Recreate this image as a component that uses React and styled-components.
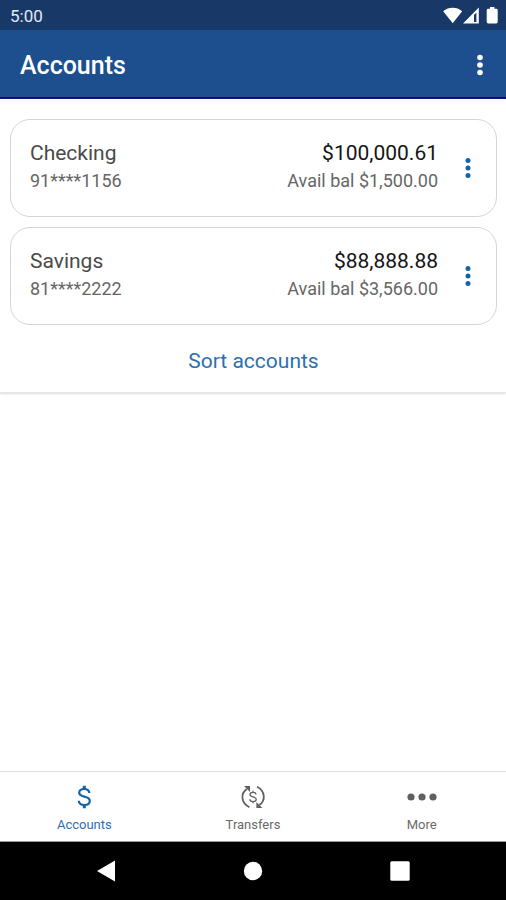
import React from "react";
import styled, { createGlobalStyle } from "styled-components";

const COLORS = {
  status: "#183967",
  header: "#1d4f8f",
  headerEdge: "#06097c",
  link: "#2e6fae",
  border: "#d5d5d5",
  text: "#4a4a4a",
  muted: "#666",
};

const accounts = [
  {
    name: "Checking",
    number: "91****1156",
    balance: "$100,000.61",
    available: "$1,500.00",
  },
  {
    name: "Savings",
    number: "81****2222",
    balance: "$88,888.88",
    available: "$3,566.00",
  },
];

const Kebab = ({ radius }) => (
  <svg width="8" height="24" viewBox="0 0 8 24" fill="currentColor">
    <circle cx="4" cy="4.5" r={radius} />
    <circle cx="4" cy="12" r={radius} />
    <circle cx="4" cy="19.5" r={radius} />
  </svg>
);

const StatusIcons = () => (
  <svg width="56" height="18" viewBox="0 0 56 18" fill="#fff">
    <path d="M.2 4.2C5.5-.3 13.9-.3 19.2 4.2L9.7 16.2Z" />
    <path
      fillRule="evenodd"
      d="M20 16.4 35.8.6V16.4ZM31 7.8V15H33.4V5.8Z"
    />
    <path d="M47 0H51.4V1.8H53.3Q54.7 1.8 54.7 3.2V15.1Q54.7 16.5 53.3 16.5H45.1Q43.7 16.5 43.7 15.1V3.2Q43.7 1.8 45.1 1.8H47Z" />
  </svg>
);

const DollarIcon = () => (
  <svg width="28" height="28" viewBox="0 0 28 28" fill="none" stroke="currentColor">
    <path
      strokeWidth="2.2"
      d="M19.4 10C19.4 7.4 17.2 6 14.2 6S9.2 7.4 9.2 9.8C9.2 15.3 19.8 12 19.8 18C19.8 20.6 17.5 22 14.3 22S8.8 20.4 8.8 17.8"
    />
    <path strokeWidth="3" d="M14.3 2.8V6.2M14.3 21.8V25.2" />
  </svg>
);

const TransferIcon = () => (
  <svg width="28" height="28" viewBox="0 0 28 28" fill="none" stroke="currentColor">
    <path strokeWidth="1.8" d="M10.4 24.2C1.8 20 1.4 10.4 7.8 6" />
    <path strokeWidth="1.8" d="M18 3.8C26.4 8 26.8 17.6 20.4 22" />
    <path fill="currentColor" stroke="none" d="M5 3H11V9Z" />
    <path fill="currentColor" stroke="none" d="M23.4 25H17.4V19Z" />
    <path
      strokeWidth="1.3"
      d="M17 11.4C17 10 15.8 9.4 14 9.4S11 10.1 11 11.6C11 14.8 17.2 13 17.2 16.3C17.2 17.8 15.9 18.6 14 18.6S10.8 17.8 10.8 16.2M14 7.8V9.4M14 18.6V20.2"
    />
  </svg>
);

const MoreIcon = () => (
  <svg width="30" height="28" viewBox="0 0 30 28" fill="currentColor">
    <circle cx="4" cy="14" r="3.6" />
    <circle cx="15" cy="14" r="3.6" />
    <circle cx="26" cy="14" r="3.6" />
  </svg>
);

const App = () => {
  return (
    <Wrapper>
      <GlobalStyle />
      <StatusBar>
        <span>5:00</span>
        <StatusIcons />
      </StatusBar>
      <Header>
        <h1>Accounts</h1>
        <MenuButton aria-label="Options">
          <Kebab radius={2.8} />
        </MenuButton>
      </Header>
      <Main>
        <Panel>
          {accounts.map((account) => (
            <Card key={account.number}>
              <Details>
                <Name>{account.name}</Name>
                <Small>{account.number}</Small>
              </Details>
              <Details $end>
                <Balance>{account.balance}</Balance>
                <Small>Avail bal {account.available}</Small>
              </Details>
              <CardMenu aria-label={`${account.name} options`}>
                <Kebab radius={2.5} />
              </CardMenu>
            </Card>
          ))}
          <SortButton>Sort accounts</SortButton>
        </Panel>
      </Main>
      <Tabs>
        <Tab href="#accounts" $active>
          <DollarIcon />
          Accounts
        </Tab>
        <Tab href="#transfers">
          <TransferIcon />
          Transfers
        </Tab>
        <Tab href="#more">
          <MoreIcon />
          More
        </Tab>
      </Tabs>
      <SystemBar>
        <SystemButton aria-label="Back">
          <svg width="20" height="22" viewBox="0 0 20 22" fill="#fff">
            <path d="M1 11 19 .5V21.5Z" />
          </svg>
        </SystemButton>
        <SystemButton aria-label="Home">
          <svg width="20" height="20" viewBox="0 0 20 20" fill="#fff">
            <circle cx="10" cy="10" r="9.2" />
          </svg>
        </SystemButton>
        <SystemButton aria-label="Recent apps">
          <svg width="20" height="20" viewBox="0 0 20 20" fill="#fff">
            <rect x=".3" y=".3" width="19.4" height="19.4" rx="1.5" />
          </svg>
        </SystemButton>
      </SystemBar>
    </Wrapper>
  );
};

const GlobalStyle = createGlobalStyle`
  * {
    box-sizing: border-box;
    margin: 0;
    padding: 0;
  }

  body {
    background: #fff;
    font-family: Roboto, "Liberation Sans", sans-serif;
  }

  button {
    border: none;
    background: none;
    font-family: inherit;
    cursor: pointer;
  }

  svg {
    display: block;
  }
`;

const Wrapper = styled.div`
  display: flex;
  flex-direction: column;
  min-height: 100vh;
`;
const StatusBar = styled.div`
  display: flex;
  justify-content: space-between;
  align-items: center;
  height: 30px;
  padding: 2px 7px 0 10px;
  background: ${COLORS.status};
  color: #e3eaf5;
  font-size: 17px;
  line-height: 20px;
`;
const Header = styled.header`
  display: flex;
  justify-content: space-between;
  align-items: center;
  height: 69px;
  padding: 0 14px 0 20px;
  background: ${COLORS.header};
  border-bottom: 2px solid ${COLORS.headerEdge};
  color: #fff;

  h1 {
    padding-top: 4px;
    font-size: 25px;
    line-height: 28px;
    font-weight: 500;
  }
`;
const MenuButton = styled.button`
  display: flex;
  justify-content: center;
  width: 24px;
  padding-top: 2px;
  color: #fff;
`;
const Main = styled.main`
  flex: 1;
`;
const Panel = styled.section`
  display: flex;
  flex-direction: column;
  gap: 10px;
  padding: 20px 9px 15px 10px;
  border-bottom: 1px solid #e6e6e6;
  box-shadow: 0 1px 2px #dcdcdc;
`;
const Card = styled.article`
  display: flex;
  padding: 19px 16px 19px 19px;
  border: 1px solid ${COLORS.border};
  border-radius: 20px;
`;
const Details = styled.div`
  display: flex;
  flex-direction: column;
  flex: ${({ $end }) => ($end ? "none" : 1)};
  align-items: ${({ $end }) => ($end ? "flex-end" : "flex-start")};
  gap: 2px;
  padding-bottom: 4px;
`;
const Name = styled.h2`
  color: ${COLORS.text};
  font-size: 21px;
  line-height: 28px;
  font-weight: 400;
`;
const Balance = styled.p`
  color: #151515;
  font-size: 21px;
  line-height: 28px;
`;
const Small = styled.p`
  color: ${COLORS.muted};
  font-size: 18px;
  line-height: 24px;
`;
const CardMenu = styled.button`
  display: flex;
  justify-content: center;
  align-items: center;
  width: 24px;
  margin-left: 18px;
  color: #1663a8;
`;
const SortButton = styled.button`
  align-self: center;
  padding: 14px 16px 4px;
  color: ${COLORS.link};
  font-size: 21px;
  line-height: 24px;
`;
const Tabs = styled.nav`
  display: flex;
  height: 71px;
  border-top: 1px solid #dedede;
  border-bottom: 1px solid #9b9b9b;
`;
const Tab = styled.a`
  display: flex;
  flex: 1;
  flex-direction: column;
  align-items: center;
  gap: 5px;
  padding-top: 11px;
  color: ${({ $active }) => ($active ? COLORS.link : "#6a6a6a")};
  font-size: 13px;
  line-height: 18px;
  text-decoration: none;

  svg {
    color: ${({ $active }) => ($active ? "#1663a8" : "#606060")};
  }
`;
const SystemBar = styled.footer`
  display: flex;
  height: 58px;
  padding: 0 32px;
  background: #000;
`;
const SystemButton = styled.button`
  display: flex;
  flex: 1;
  justify-content: center;
  align-items: center;
`;

export default App;
